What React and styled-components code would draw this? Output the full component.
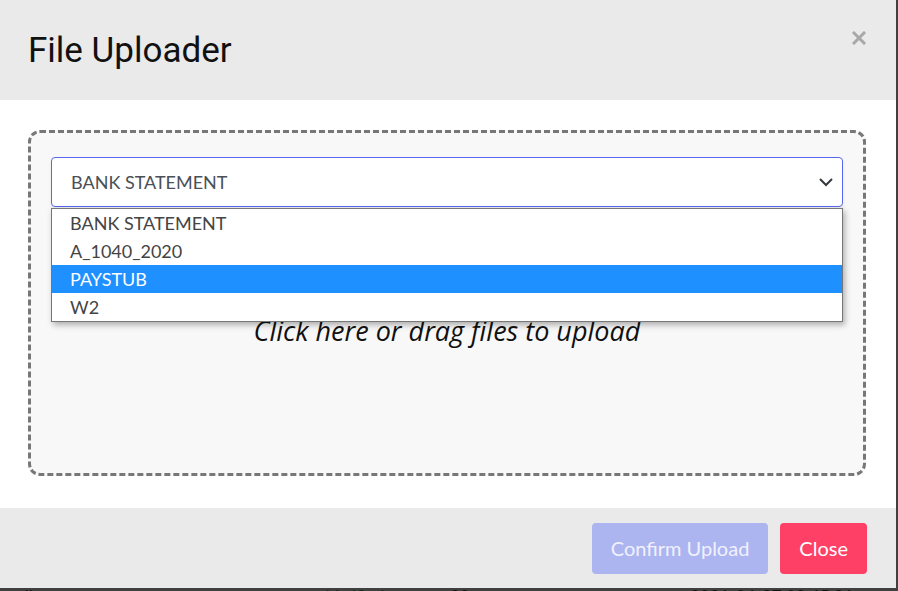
import React from 'react';
import styled, { createGlobalStyle } from 'styled-components';

const GlobalStyle = createGlobalStyle`
  html, body {
    margin: 0;
    padding: 0;
    background: #404040;
    font-family: Lato, "Liberation Sans", sans-serif;
  }
`

let Page = styled.div`
  position: relative;
  width: 898px;
  height: 591px;
  overflow: hidden;
  background: #404040;
`
let BehindRow = styled.div`
  display: flex;
  align-items: center;
  padding-top: 586px;
  font-size: 17px;
  color: #101010;
`
let BehindCell = styled.span`
  width: ${props => props.w}px;
  color: ${props => props.color || '#101010'};
`
let Modal = styled.div`
  position: absolute;
  top: 0;
  left: 0;
  width: 896px;
  height: 588px;
  display: flex;
  flex-direction: column;
  background: #fff;
`
let Header = styled.div`
  height: 100px;
  flex-shrink: 0;
  display: flex;
  align-items: center;
  justify-content: space-between;
  padding: 0 30px 0 28px;
  box-sizing: border-box;
  background: #eaeaea;
`
let Title = styled.h1`
  margin: 0;
  font-family: Roboto, "Liberation Sans", sans-serif;
  font-weight: 400;
  font-size: 35px;
  color: #111;
`
let CloseX = styled.button`
  border: none;
  background: none;
  padding: 0;
  margin-top: -24px;
  cursor: pointer;
  display: flex;
`
let Body = styled.div`
  flex: 1;
  padding: 30px 30px 32px 28px;
  box-sizing: border-box;
  display: flex;
`
let DropZone = styled.div`
  flex: 1;
  position: relative;
  border: 3px dashed #777;
  border-radius: 12px;
  background: #f8f8f8;
  padding: 24px 20px;
  display: flex;
  flex-direction: column;
`
let SelectBox = styled.div`
  height: 50px;
  box-sizing: border-box;
  border: 1px solid #5866f0;
  border-radius: 4px;
  background: #fff;
  display: flex;
  align-items: center;
  justify-content: space-between;
  padding: 0 8px 0 19px;
  font-size: 18px;
  color: #495057;
  box-shadow: 0 2px 4px rgba(0,0,0,0.06);
`
let OptionList = styled.ul`
  position: absolute;
  top: 75px;
  left: 20px;
  right: 20px;
  margin: 0;
  padding: 0;
  list-style: none;
  background: #fff;
  border: 1px solid #777;
  box-shadow: 2px 3px 6px rgba(0,0,0,0.3);
  z-index: 2;
`
let Option = styled.li`
  height: 28px;
  line-height: 28px;
  padding-left: 18px;
  font-size: 18px;
  color: ${props => props.active ? '#fff' : '#444'};
  background: ${props => props.active ? '#1e90ff' : '#fff'};
`
let DropText = styled.div`
  margin-top: 109px;
  text-align: center;
  font-family: "Open Sans", Lato, sans-serif;
  font-size: 27px;
  font-style: italic;
  color: #111;
  line-height: 30px;
`
let Footer = styled.div`
  height: 80px;
  flex-shrink: 0;
  display: flex;
  align-items: center;
  justify-content: flex-end;
  gap: 12px;
  padding: 0 29px;
  background: #eaeaea;
`
let Button = styled.button`
  height: 51px;
  padding: 0 ${props => props.px}px;
  border: none;
  border-radius: 4px;
  font-family: Lato, "Liberation Sans", sans-serif;
  font-size: 20px;
  color: ${props => props.disabled ? '#f0f1fd' : '#fff'};
  background: ${props => props.bg};
  cursor: pointer;
`

const options = ['BANK STATEMENT', 'A_1040_2020', 'PAYSTUB', 'W2'];

export default function App() {
  return (
    <Page>
      <GlobalStyle />
      <BehindRow>
        <BehindCell w={300}>entibar</BehindCell>
        <BehindCell w={150} color="#0c2a10">✓ · Verified</BehindCell>
        <BehindCell w={240}>20</BehindCell>
        <BehindCell w={200}>2021-04-27 02:45:21</BehindCell>
      </BehindRow>
      <Modal>
        <Header>
          <Title>File Uploader</Title>
          <CloseX aria-label="close">
            <svg width="14" height="14" viewBox="0 0 14 14">
              <path d="M2 2 L12 12 M12 2 L2 12" stroke="#a8a8a8" strokeWidth="3" strokeLinecap="square" />
            </svg>
          </CloseX>
        </Header>
        <Body>
          <DropZone>
            <SelectBox>
              <span>BANK STATEMENT</span>
              <svg width="16" height="16" viewBox="0 0 16 16">
                <path d="M2 5 L8 11 L14 5" fill="none" stroke="#343a40" strokeWidth="2" />
              </svg>
            </SelectBox>
            <OptionList>
              {options.map((o, i) =>
                <Option key={i} active={o === 'PAYSTUB'}>{o}</Option>
              )}
            </OptionList>
            <DropText>Click here or drag files to upload</DropText>
          </DropZone>
        </Body>
        <Footer>
          <Button disabled bg="#adb5f0" px={19}>Confirm Upload</Button>
          <Button bg="#ff4066" px={19}>Close</Button>
        </Footer>
      </Modal>
    </Page>
  );
}
